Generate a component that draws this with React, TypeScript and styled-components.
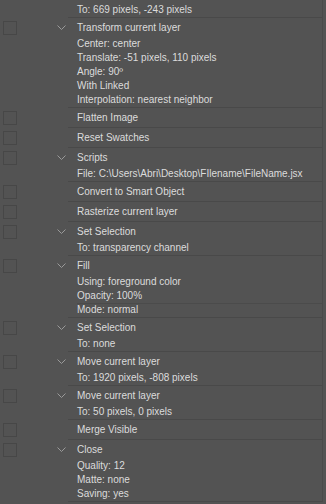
import React from "react";
import styled, { createGlobalStyle } from "styled-components";

interface IStep {
  title?: string;
  params?: string[];
  dividerAt?: number;
}

const STEPS: IStep[] = [
  { params: ["To: 669 pixels, -243 pixels"] },
  {
    title: "Transform current layer",
    params: [
      "Center: center",
      "Translate: -51 pixels, 110 pixels",
      "Angle: 90º",
      "With Linked",
      "Interpolation: nearest neighbor",
    ],
  },
  { title: "Flatten Image" },
  { title: "Reset Swatches" },
  {
    title: "Scripts",
    params: ["File: C:\\Users\\Abri\\Desktop\\FIlename\\FileName.jsx"],
  },
  { title: "Convert to Smart Object" },
  { title: "Rasterize current layer" },
  { title: "Set Selection", params: ["To: transparency channel"] },
  {
    title: "Fill",
    params: ["Using: foreground color", "Opacity: 100%", "Mode: normal"],
    dividerAt: 2,
  },
  { title: "Set Selection", params: ["To: none"] },
  { title: "Move current layer", params: ["To: 1920 pixels, -808 pixels"] },
  { title: "Move current layer", params: ["To: 50 pixels, 0 pixels"] },
  { title: "Merge Visible" },
  {
    title: "Close",
    params: ["Quality: 12", "Matte: none", "Saving: yes"],
  },
];

const GlobalStyle = createGlobalStyle`
  html, body {
    margin: 0;
    background: #535353;
  }
  body {
    font-family: "Liberation Sans", Arial, sans-serif;
    font-size: 10px;
    color: #dcdcdc;
  }
`;

const Panel = styled.div`
  width: 322px;
  border-right: 1px solid #4a4a4a;
`;

const Block = styled.div`
  display: grid;
  grid-template-columns: 68px 1fr;
`;

const Gutter = styled.div`
  height: 19px;
  display: flex;
  align-items: center;
  justify-content: space-between;
  padding: 0 2px 0 3px;
`;

const Toggle = styled.div`
  width: 12px;
  height: 12px;
  border: 1px solid #474747;
  box-sizing: content-box;
`;

const Body = styled.div<{ $partial?: boolean }>`
  border-bottom: 1px solid #494949;
  padding-left: 9px;
  padding-top: ${({ $partial }) => ($partial ? "3px" : "0")};
  white-space: nowrap;
  overflow: hidden;
`;

const Title = styled.div`
  height: 19px;
  line-height: 19px;
`;

const Param = styled.div<{ $divided?: boolean }>`
  height: 14px;
  line-height: 14px;
  box-shadow: ${({ $divided }) =>
    $divided ? "inset 0 1px 0 #4b4b4b" : "none"};
`;

function Chevron() {
  return (
    <svg width="9" height="5" viewBox="0 0 9 5">
      <path d="M0.5 0.5 L4.5 4.5 L8.5 0.5" fill="none" stroke="#9a9a9a" strokeWidth="1" />
    </svg>
  );
}

export default function App() {
  return (
    <>
      <GlobalStyle />
      <Panel>
        {STEPS.map((step, index) => (
          <Block key={index}>
            <div>
              {step.title && (
                <Gutter>
                  <Toggle />
                  {step.params ? <Chevron /> : <span />}
                </Gutter>
              )}
            </div>
            <Body $partial={!step.title}>
              {step.title && <Title>{step.title}</Title>}
              {step.params?.map((p, i) => (
                <Param key={i} $divided={step.dividerAt === i}>
                  {p}
                </Param>
              ))}
            </Body>
          </Block>
        ))}
      </Panel>
    </>
  );
}
